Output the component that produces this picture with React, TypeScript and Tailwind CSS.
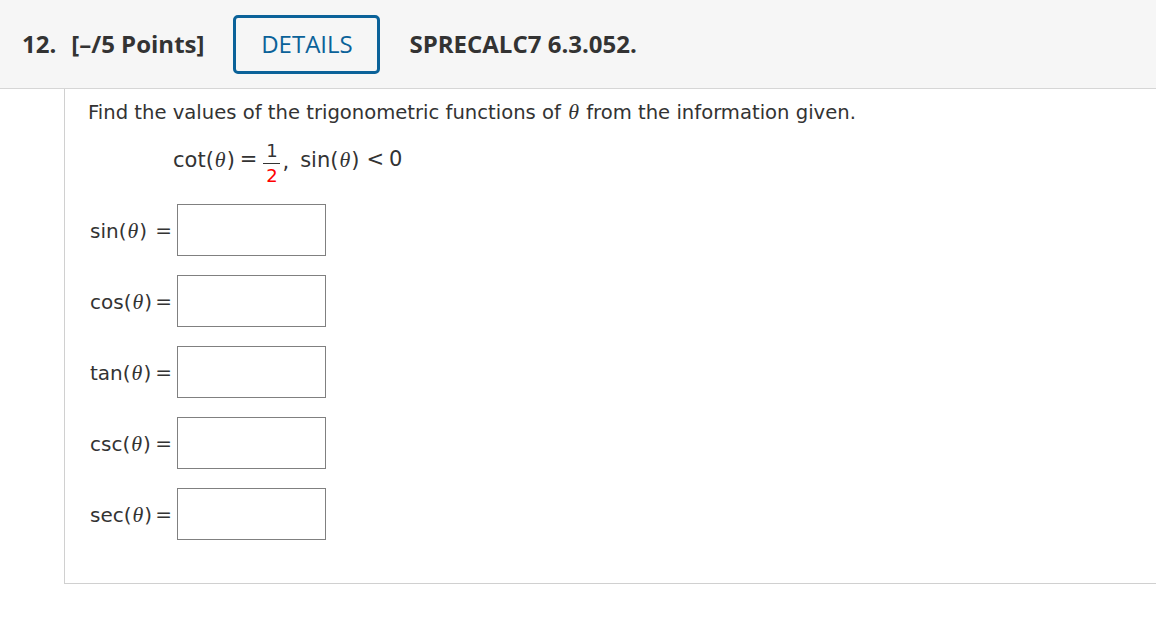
import React from "react";

const Theta = () => (
  <span className="italic text-[22px] px-[1px]" style={{ fontFamily: '"Liberation Serif", serif' }}>
    θ
  </span>
);

const Row = ({ fn }: { fn: string }) => (
  <div className="flex items-center h-[52px]">
    <div className="w-[82px] flex items-center justify-between text-[20px] text-[#333]">
      <span>
        {fn}(
        <Theta />)
      </span>
      <span>=</span>
    </div>
    <div className="ml-[5px] w-[149px] h-[52px] border border-[#808080] bg-white" />
  </div>
);

export default function App() {
  return (
    <div className="w-[1156px] h-[625px] bg-white overflow-hidden" style={{ fontFamily: '"DejaVu Sans", Verdana, sans-serif' }}>
      <div className="h-[89px] bg-[#f6f6f6] border-b border-[#d6d6d6] flex items-center" style={{ fontFamily: '"Open Sans", sans-serif' }}>
        <span className="ml-[22px] text-[24px] font-bold text-[#333]">12.</span>
        <span className="ml-[15px] text-[24px] font-bold text-[#333]">[–/5 Points]</span>
        <div className="ml-[29px] w-[147px] h-[59px] border-[3px] border-[#0b6299] rounded-[5px] flex items-center justify-center text-[24px] text-[#0b6299]">
          DETAILS
        </div>
        <span className="ml-[29px] text-[24px] font-bold text-[#333]">SPRECALC7 6.3.052.</span>
      </div>
      <div className="ml-[64px] h-[495px] border-l border-b border-[#d0d0d0] pl-[23px] text-[#333]">
        <div className="pt-[9px] text-[19.6px] leading-[28px]">
          Find the values of the trigonometric functions of <Theta /> from the information given.
        </div>
        <div className="mt-[10px] ml-[85px] flex items-center text-[21px] h-[46px]">
          <span>
            cot(
            <Theta />)
          </span>
          <span className="ml-[5px]">=</span>
          <span className="ml-[6px] mt-[6px] inline-flex flex-col items-center leading-none text-[18px]">
            <span className="pb-[3px]">1</span>
            <span className="w-[17px] h-[1px] bg-[#333]" />
            <span className="pt-[3px] text-[#ff0000]">2</span>
          </span>
          <span className="ml-[2px] mt-[6px]">,</span>
          <span className="ml-[11px]">
            sin(
            <Theta />)
          </span>
          <span className="ml-[7px]">&lt;</span>
          <span className="ml-[5px]">0</span>
        </div>
        <div className="mt-[21px] flex flex-col gap-[19px] pl-[2px]">
          <Row fn="sin" />
          <Row fn="cos" />
          <Row fn="tan" />
          <Row fn="csc" />
          <Row fn="sec" />
        </div>
      </div>
    </div>
  );
}
